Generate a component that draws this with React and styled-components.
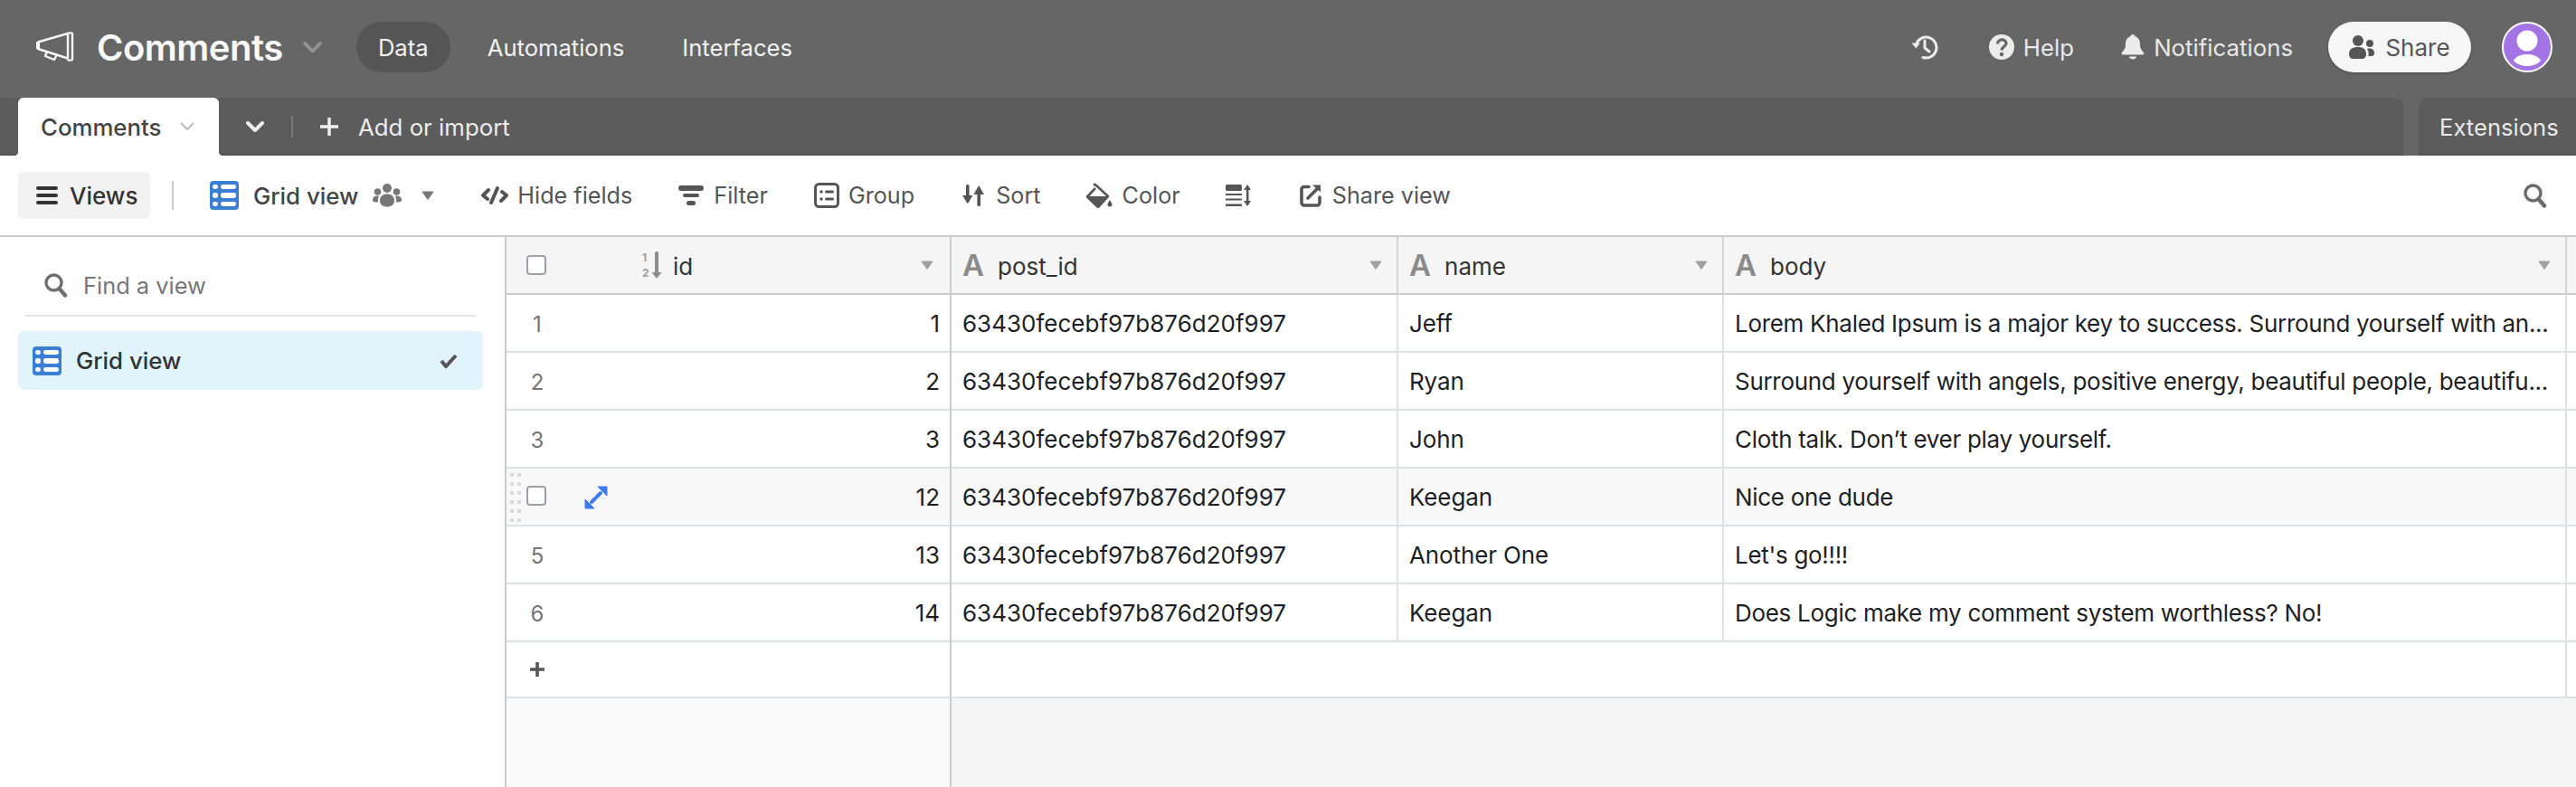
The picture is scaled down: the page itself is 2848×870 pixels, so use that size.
import React from 'react'
import styled, { createGlobalStyle } from 'styled-components'

const GlobalStyle = createGlobalStyle`
  html, body { margin: 0; padding: 0; background: #fff; }
  body { font-family: Inter, "Noto Sans", "Liberation Sans", sans-serif; }
  * { box-sizing: border-box; }
`

const Page = styled.div`
  width: 2848px;
  height: 870px;
  overflow: hidden;
  display: flex;
  flex-direction: column;
  background: #fff;
`
const Slot = styled.span`
  display: flex;
  flex: none;
  margin-left: ${p => p.$ml || 0}px;
  margin-right: ${p => p.$mr || 0}px;
`

// top bar
const TopBar = styled.div`
  height: 108px;
  flex: none;
  background: #666666;
  display: flex;
  align-items: center;
  padding: 0 26px 4px 40px;
  color: #fff;
`
const Title = styled.div`
  font-size: 40px;
  font-weight: 600;
  letter-spacing: -0.5px;
  margin-left: 25px;
  color: #f8f8f8;
`
const NavPill = styled.div`
  height: 56px;
  width: ${p => (p.$w ? `${p.$w}px` : 'auto')};
  margin-left: ${p => p.$ml || 0}px;
  border-radius: 28px;
  display: flex;
  align-items: center;
  justify-content: center;
  font-size: 25.6px;
  color: #f2f2f2;
  background: ${p => (p.$active ? '#555555' : 'transparent')};
`
const Spacer = styled.div`
  flex: 1;
`
const TopAction = styled.div`
  display: flex;
  align-items: center;
  gap: 10px;
  margin-left: ${p => p.$ml || 0}px;
  font-size: 25.8px;
  color: #e8e8e8;
`
const ShareButton = styled.div`
  width: 158px;
  height: 56px;
  margin-left: 39px;
  border-radius: 28px;
  background: #f6f6f6;
  box-shadow: 0 1px 3px rgba(0, 0, 0, 0.3);
  color: #555;
  font-size: 26px;
  display: flex;
  align-items: center;
  justify-content: center;
  gap: 12px;
`
const Avatar = styled.svg`
  width: 56px;
  height: 56px;
  margin-left: 34px;
  flex: none;
`

// tab strip
const TabStrip = styled.div`
  height: 64px;
  flex: none;
  background: #666666;
  display: flex;
  gap: 17px;
`
const TabPanel = styled.div`
  flex: 1;
  background: #5c5c5c;
  border-radius: 0 10px 0 0;
  box-shadow: inset 0 -3px 3px -2px rgba(0, 0, 0, 0.18);
  display: flex;
  align-items: center;
  padding-left: 20px;
`
const ActiveTab = styled.div`
  position: relative;
  width: 222px;
  height: 64px;
  background: #fff;
  border-radius: 6px 6px 0 0;
  display: flex;
  align-items: center;
  padding-left: 25px;
  gap: 21px;
  font-size: 25.8px;
  font-weight: 500;
  color: #444;
  &::before, &::after {
    content: '';
    position: absolute;
    bottom: 0;
    width: 5px;
    height: 5px;
  }
  &::before {
    left: -5px;
    background: radial-gradient(circle at 0 0, transparent 5px, #fff 5.5px);
  }
  &::after {
    right: -5px;
    background: radial-gradient(circle at 100% 0, transparent 5px, #fff 5.5px);
  }
`
const TabDivider = styled.div`
  width: 2px;
  height: 24px;
  margin: 0 30px;
  background: #777;
`
const AddLabel = styled.div`
  font-size: 25.8px;
  color: #ececec;
  margin-left: 22px;
`
const ExtensionsTab = styled.div`
  width: 174px;
  background: #5c5c5c;
  border-radius: 10px 0 0 0;
  box-shadow: inset 0 -3px 3px -2px rgba(0, 0, 0, 0.18);
  display: flex;
  align-items: center;
  padding-left: 23px;
  font-size: 25.6px;
  color: #e8e8e8;
`

// view toolbar
const Toolbar = styled.div`
  height: 90px;
  flex: none;
  border-bottom: 2px solid #cccccc;
  display: flex;
  align-items: center;
  padding: 0 31px 0 20px;
`
const ViewsButton = styled.div`
  width: 146px;
  height: 52px;
  border-radius: 6px;
  background: #f2f2f2;
  display: flex;
  align-items: center;
  gap: 13px;
  padding-left: 20px;
  font-size: 26px;
  font-weight: 500;
  color: #333;
`
const ToolDivider = styled.div`
  width: 2px;
  height: 32px;
  margin: 0 40px 0 24px;
  background: #ccc;
`
const ToolItem = styled.div`
  display: flex;
  align-items: center;
  gap: ${p => p.$gap || 11}px;
  margin-left: ${p => p.$ml || 0}px;
  font-size: ${p => (p.$dark ? 25.8 : 25.2)}px;
  color: ${p => (p.$dark ? '#444' : '#555')};
  font-weight: ${p => (p.$dark ? 500 : 400)};
`

// body
const Main = styled.div`
  flex: 1;
  display: flex;
  min-height: 0;
`
const Sidebar = styled.div`
  width: 560px;
  flex: none;
  border-right: 2px solid #cccccc;
  padding: 20px 24px 0 20px;
`
const FindRow = styled.div`
  height: 68px;
  margin: 0 8px;
  padding-left: 20px;
  border-bottom: 2px solid #e5e5e5;
  display: flex;
  align-items: center;
  gap: 16px;
  font-size: 25.4px;
  color: #777;
`
const ViewItem = styled.div`
  height: 65px;
  margin-top: 16px;
  border-radius: 6px;
  background: #e1f3fb;
  display: flex;
  align-items: center;
  padding: 0 28px 0 16px;
  gap: 16px;
  font-size: 25.8px;
  font-weight: 500;
  color: #333;
`
const GridArea = styled.div`
  flex: 1;
  display: flex;
  min-width: 0;
`
const LeftPane = styled.div`
  width: 492px;
  flex: none;
  border-right: 2px solid #cccccc;
  background: #fafafa;
`
const RightPane = styled.div`
  flex: 1;
  background: #f5f5f5;
`
const HeadRow = styled.div`
  height: 64px;
  display: flex;
  background: #f5f5f5;
  border-bottom: 2px solid #cccccc;
`
const HeadCell = styled.div`
  width: ${p => p.$w}px;
  flex: none;
  display: flex;
  align-items: center;
  padding: 0 16px 0 12px;
  border-right: 2px solid #d4d4d4;
  font-size: 26px;
  color: #333;
`
const HeadLabel = styled.span`
  padding-top: 3px;
`
const FieldGlyph = styled.span`
  font-size: 33px;
  font-weight: 600;
  line-height: 1;
  color: #8a8a8a;
  margin-right: 15px;
`
const Row = styled.div`
  height: ${p => p.$h || 64}px;
  display: flex;
  background: ${p => (p.$hover ? '#f8f8f8' : '#fff')};
  border-bottom: 2px solid #dfe2e4;
`
const IdHead = styled.div`
  width: 100%;
  height: 64px;
  display: flex;
  align-items: center;
  padding: 0 18px 0 22px;
  background: #f5f5f5;
  border-bottom: 2px solid #cccccc;
  font-size: 26px;
  color: #333;
`
const RowNumber = styled.div`
  width: 68px;
  text-align: center;
  font-size: 24px;
  color: #757575;
  line-height: 65px;
`
const IdValue = styled.div`
  flex: 1;
  text-align: right;
  padding-right: 11px;
  font-size: 26px;
  color: #1d1f25;
  line-height: 64px;
`
const Cell = styled.div`
  width: ${p => p.$w}px;
  flex: none;
  padding: 0 0 0 12px;
  border-right: 2px solid #dfe2e4;
  font-size: 26px;
  letter-spacing: ${p => p.$ls || 0}px;
  line-height: 64px;
  color: #1d1f25;
  white-space: nowrap;
  overflow: hidden;
`
const HoverTools = styled.div`
  position: relative;
  width: 110px;
  flex: none;
`
const AddMark = styled.div`
  width: 68px;
  height: 60px;
  display: flex;
  align-items: center;
  justify-content: center;
`
const CheckBox = styled.div`
  width: 22px;
  height: 22px;
  flex: none;
  background: #fff;
  border: 2px solid #9ba1a8;
  border-radius: 4px;
`
const HoverBox = styled(CheckBox)`
  position: absolute;
  left: 22px;
  top: 19px;
`
const Handle = styled.svg`
  position: absolute;
  left: 4px;
  top: 5px;
`
const Expand = styled.svg`
  position: absolute;
  left: 86px;
  top: 19px;
`

const Chevron = ({ size = 20, color = '#fff', sw = 4 }) => (
  <svg width={size} height={size * 0.6} viewBox="0 0 20 12">
    <path d="M2 2l8 8 8-8" fill="none" stroke={color} strokeWidth={sw} strokeLinecap="round" strokeLinejoin="round" />
  </svg>
)
const Caret = ({ color = '#777', w = 14, h = 10 }) => (
  <svg width={w} height={h} viewBox="0 0 14 10">
    <path d="M1 1h12L7 9.5z" fill={color} stroke={color} strokeLinejoin="round" />
  </svg>
)
const Megaphone = () => (
  <svg width="42" height="34" viewBox="0 0 42 34" fill="none" stroke="#f5f5f5" strokeWidth="2.4" strokeLinejoin="round">
    <path d="M2 11.5l33-9.5v27.5L2 19z" />
    <path d="M35 2.5c0-1.4 5-1.4 5 0v28c0 1.4-5 1.4-5 0" />
    <path d="M2 11.5v7.5" strokeWidth="4" />
    <path d="M12 22l-2 5 10 4 3-6" />
  </svg>
)
const GridIcon = () => (
  <svg width="32" height="32" viewBox="0 0 32 32">
    <rect width="32" height="32" rx="4" fill="#3b7fd4" />
    <g fill="#fff">
      <rect x="3" y="4" width="6" height="5" rx="2.4" />
      <rect x="12" y="4" width="17" height="5" rx="2.4" />
      <rect x="3" y="13" width="6" height="6" rx="2.4" />
      <rect x="12" y="13" width="17" height="6" rx="2.4" />
      <rect x="3" y="23" width="6" height="5" rx="2.4" />
      <rect x="12" y="23" width="17" height="5" rx="2.4" />
    </g>
  </svg>
)
const SearchIcon = ({ color = '#6b6b6b' }) => (
  <svg width="28" height="28" viewBox="0 0 28 28" fill="none" stroke={color}>
    <circle cx="11.5" cy="11.5" r="8.5" strokeWidth="3.4" />
    <path d="M17.5 18l6.5 7.5" strokeWidth="4.4" strokeLinecap="round" />
  </svg>
)
const HistoryIcon = () => (
  <svg width="30" height="30" viewBox="0 0 30 30" fill="none" stroke="#ececec">
    <path d="M5.5 12A11.5 11.5 0 1 1 13 26.5" strokeWidth="3" strokeLinecap="round" />
    <path d="M0.5 10.5h9.5l-4.7 6z" fill="#ececec" stroke="none" />
    <path d="M15 8v8l5 4" strokeWidth="3" strokeLinecap="round" strokeLinejoin="round" />
  </svg>
)
const HelpIcon = () => (
  <svg width="28" height="28" viewBox="0 0 28 28">
    <circle cx="14" cy="14" r="14" fill="#ececec" />
    <path d="M9.5 10.5c0-6 9.500-6 9.500-.5 0 3.500-5 3.500-5 7.500" fill="none" stroke="#666" strokeWidth="3.2" />
    <circle cx="14" cy="22" r="2.2" fill="#666" />
  </svg>
)
const BellIcon = () => (
  <svg width="26" height="30" viewBox="0 0 26 30" fill="#ececec">
    <path d="M13 1c1.600 0 2.300 1 2.500 2.200C20 4.500 21 8.500 21 12c0 5 2 6.500 4 9 .8 1 .3 2.500-1.200 2.500H2.200C.7 23.500.2 22 1 21c2-2.500 4-4 4-9 0-3.500 1-7.500 5.500-8.800C10.700 2 11.400 1 13 1z" />
    <path d="M9 25.500h8c0 4-8 4-8 0z" />
  </svg>
)
const PeopleIcon = () => (
  <svg width="28" height="28" viewBox="0 0 28 28" fill="#555">
    <circle cx="10" cy="7" r="6" />
    <path d="M0 22c0-6 4-8 10-8s9 2.500 9 8c0 3-2 5-4 5H4c-2 0-4-2-4-5z" />
    <circle cx="23" cy="10" r="4" />
    <path d="M21 15.500c4-.5 7 1 7 5 0 2-1 3.500-3 3.500h-3.500c.5-3.500 0-6-1.500-8z" />
  </svg>
)
const TeamIcon = () => (
  <svg width="32" height="26" viewBox="0 0 32 26" fill="#777">
    <circle cx="16" cy="5" r="5" />
    <circle cx="5.5" cy="9" r="3.8" />
    <circle cx="26.5" cy="9" r="3.8" />
    <path d="M8 19c0-5 3-7.500 8-7.500s8 2.500 8 7.500c0 4-3 6.500-8 6.500S8 23 8 19z" />
    <path d="M0 18c0-3 2-4.500 5-4.500.8 0 1.500.1 2 .3-.8 1.500-1 3.200-1 5.200 0 .5 0 1 .1 1.500C2.500 20.500 0 20.500 0 18z" />
    <path d="M32 18c0-3-2-4.500-5-4.500-.8 0-1.500.1-2 .3.800 1.500 1 3.200 1 5.200 0 .5 0 1-.1 1.500 3.600 0 6.100 0 6.100-2.500z" />
  </svg>
)
const HideIcon = () => (
  <svg width="30" height="22" viewBox="0 0 30 22" fill="none" stroke="#555" strokeWidth="4" strokeLinecap="round" strokeLinejoin="round">
    <path d="M8 5l-6 6 5 4" />
    <path d="M23 7l5 4-6 6" />
    <path d="M18 3l-7 16" />
  </svg>
)
const FilterIcon = () => (
  <svg width="28" height="22" viewBox="0 0 28 22" fill="#555">
    <rect width="28" height="6" rx="3" />
    <rect x="5" y="9" width="18" height="4" rx="2" />
    <rect x="9" y="17" width="10" height="5" rx="2.5" />
  </svg>
)
const GroupIcon = () => (
  <svg width="28" height="28" viewBox="0 0 28 28">
    <rect x="1.5" y="1.5" width="25" height="25" rx="4" fill="none" stroke="#555" strokeWidth="3" />
    <g fill="#555">
      <circle cx="8" cy="10" r="1.8" />
      <circle cx="8" cy="18" r="1.8" />
      <rect x="12" y="8.5" width="10" height="3" rx="1.5" />
      <rect x="12" y="16.5" width="10" height="3" rx="1.5" />
    </g>
  </svg>
)
const SortIcon = () => (
  <svg width="24" height="26" viewBox="0 0 24 26" fill="#555">
    <rect x="4" y="1" width="3.6" height="20" rx="1.5" />
    <path d="M0 13h11.500l-5.700 9z" />
    <rect x="16.4" y="4" width="3.6" height="21" rx="1.5" />
    <path d="M12.400 12h11.600l-5.800-10z" />
  </svg>
)
const ColorIcon = () => (
  <svg width="30" height="28" viewBox="0 0 30 28" fill="#555">
    <path d="M8 1.500l3 1.500L24 15 13 27 1 15.500 10 6" fill="none" stroke="#555" strokeWidth="2.6" strokeLinejoin="round" />
    <path d="M1.500 15h22L13 27z" />
    <path d="M26 19c1.500 2.500 2.500 3.500 2.500 5a2.500 2.500 0 0 1-5 0c0-1.500 1-2.500 2.500-5z" />
  </svg>
)
const RowHeightIcon = () => (
  <svg width="28" height="24" viewBox="0 0 28 24" fill="#555">
    <rect width="18" height="7" rx="1.5" />
    <rect y="10" width="18" height="2" />
    <rect y="15.5" width="18" height="2" />
    <rect y="21.5" width="18" height="2.5" />
    <rect x="23" y="2" width="2.5" height="20" />
    <path d="M20 6l4.200-6L28 6zM20 18h8l-3.800 6z" />
  </svg>
)
const ShareViewIcon = () => (
  <svg width="24" height="26" viewBox="0 0 24 26" fill="none" stroke="#555" strokeLinecap="round" strokeLinejoin="round">
    <path d="M10 3.500H5a3 3 0 0 0-3 3V21a3 3 0 0 0 3 3h14a3 3 0 0 0 3-3v-6" strokeWidth="3.6" />
    <path d="M9 16l10-10" strokeWidth="3.6" />
    <path d="M14 1.500h9v8z" fill="#555" stroke="none" />
  </svg>
)
const SortFieldIcon = () => (
  <svg width="22" height="30" viewBox="0 0 22 30">
    <rect x="14" y="0" width="4" height="26" rx="1.5" fill="#8d8d8d" />
    <path d="M10.500 23h11l-5.500 7z" fill="#8d8d8d" />
    <text x="0" y="11" fontSize="12" fontWeight="700" fontFamily="Inter, sans-serif" fill="#9a9a9a">1</text>
    <text x="0" y="28" fontSize="12" fontWeight="700" fontFamily="Inter, sans-serif" fill="#9a9a9a">2</text>
  </svg>
)

const COLS = [494, 360, 932]

const rows = [
  { n: '1', id: 1, name: 'Jeff', body: 'Lorem Khaled Ipsum is a major key to success. Surround yourself with an...' },
  { n: '2', id: 2, name: 'Ryan', body: 'Surround yourself with angels, positive energy, beautiful people, beautifu...' },
  { n: '3', id: 3, name: 'John', body: 'Cloth talk. Don\u2019t ever play yourself.' },
  { n: '4', id: 12, name: 'Keegan', body: 'Nice one dude', hover: true },
  { n: '5', id: 13, name: 'Another One', body: "Let's go!!!!" },
  { n: '6', id: 14, name: 'Keegan', body: 'Does Logic make my comment system worthless? No!' },
]

const fields = [
  { label: 'post_id', w: COLS[0] },
  { label: 'name', w: COLS[1] },
  { label: 'body', w: COLS[2] },
]

export default function App() {
  return (
    <Page>
      <GlobalStyle />
      <TopBar>
        <Megaphone />
        <Title>Comments</Title>
        <Slot $ml={22} $mr={38}>
          <Chevron size={21} color="#939393" sw={3.6} />
        </Slot>
        <NavPill $active $w={104}>Data</NavPill>
        <NavPill $ml={41}>Automations</NavPill>
        <NavPill $ml={64}>Interfaces</NavPill>
        <Spacer />
        <HistoryIcon />
        <TopAction $ml={56}><HelpIcon />Help</TopAction>
        <TopAction $ml={52}><BellIcon />Notifications</TopAction>
        <ShareButton><PeopleIcon />Share</ShareButton>
        <Avatar viewBox="0 0 56 56">
          <circle cx="28" cy="28" r="27" fill="#a473e6" stroke="#fff" strokeWidth="2" />
          <circle cx="28" cy="21" r="11.5" fill="#fff" />
          <path d="M13 43c3-5 8-7 15-7s12 2 15 7c-3 3.500-8 6-15 6s-12-2.500-15-6z" fill="#fff" />
        </Avatar>
      </TopBar>

      <TabStrip>
        <TabPanel>
          <ActiveTab>
            Comments
            <Chevron size={16} color="#c0c0c0" sw={3} />
          </ActiveTab>
          <Slot $ml={30}>
            <Chevron size={20} color="#f0f0f0" sw={4} />
          </Slot>
          <TabDivider />
          <svg width="20" height="20" viewBox="0 0 20 20">
            <path d="M10 0v20M0 10h20" stroke="#f0f0f0" strokeWidth="3.4" />
          </svg>
          <AddLabel>Add or import</AddLabel>
        </TabPanel>
        <ExtensionsTab>Extensions</ExtensionsTab>
      </TabStrip>

      <Toolbar>
        <ViewsButton>
          <svg width="24" height="20" viewBox="0 0 24 20" fill="#333">
            <rect width="24" height="4" rx="2" />
            <rect y="8" width="24" height="4" rx="2" />
            <rect y="16" width="24" height="4" rx="2" />
          </svg>
          Views
        </ViewsButton>
        <ToolDivider />
        <ToolItem $gap={16} $dark>
          <GridIcon />
          Grid view
          <TeamIcon />
        </ToolItem>
        <Slot $ml={22}><Caret /></Slot>
        <ToolItem $ml={52} $gap={10}><HideIcon />Hide fields</ToolItem>
        <ToolItem $ml={51}><FilterIcon />Filter</ToolItem>
        <ToolItem $ml={51} $gap={10}><GroupIcon />Group</ToolItem>
        <ToolItem $ml={53} $gap={13}><SortIcon />Sort</ToolItem>
        <ToolItem $ml={50} $gap={10}><ColorIcon />Color</ToolItem>
        <ToolItem $ml={50}><RowHeightIcon /></ToolItem>
        <ToolItem $ml={54} $gap={12}><ShareViewIcon />Share view</ToolItem>
        <Spacer />
        <SearchIcon />
      </Toolbar>

      <Main>
        <Sidebar>
          <FindRow>
            <SearchIcon color="#707070" />
            Find a view
          </FindRow>
          <ViewItem>
            <GridIcon />
            Grid view
            <Spacer />
            <svg width="20" height="16" viewBox="0 0 20 16">
              <path d="M2 8l5 6L18 2" fill="none" stroke="#555" strokeWidth="4" />
            </svg>
          </ViewItem>
        </Sidebar>

        <GridArea>
          <LeftPane>
            <IdHead>
              <CheckBox />
              <Slot $ml={106} $mr={12}><SortFieldIcon /></Slot>
              <HeadLabel>id</HeadLabel>
              <Spacer />
              <Caret color="#a0a0a0" />
            </IdHead>
            {rows.map(r => (
              <Row key={r.n} $hover={r.hover}>
                {r.hover ? (
                  <HoverTools>
                    <Handle width="12" height="54" viewBox="0 0 12 54" fill="#d8dadc">
                      {[0, 10, 20, 30, 40, 50].map(y => (
                        <g key={y}>
                          <rect y={y} width="4" height="4" />
                          <rect x="8" y={y} width="4" height="4" />
                        </g>
                      ))}
                    </Handle>
                    <HoverBox />
                    <Expand width="26" height="26" viewBox="0 0 26 26" fill="#3d7bf2" stroke="#3d7bf2">
                      <path d="M25 1h-10l10 10z" />
                      <path d="M1 25h10l-10-10z" />
                      <path d="M18 8l-4 4M8 18l4-4" strokeWidth="4" strokeLinecap="round" />
                    </Expand>
                  </HoverTools>
                ) : (
                  <RowNumber>{r.n}</RowNumber>
                )}
                <IdValue>{r.id}</IdValue>
              </Row>
            ))}
            <Row $h={62}>
              <AddMark>
                <svg width="16" height="16" viewBox="0 0 16 16">
                  <path d="M8 0v16M0 8h16" stroke="#555" strokeWidth="3.6" />
                </svg>
              </AddMark>
            </Row>
          </LeftPane>

          <RightPane>
            <HeadRow>
              {fields.map(f => (
                <HeadCell key={f.label} $w={f.w}>
                  <FieldGlyph>A</FieldGlyph>
                  <HeadLabel>{f.label}</HeadLabel>
                  <Spacer />
                  <Caret color="#a0a0a0" />
                </HeadCell>
              ))}
            </HeadRow>
            {rows.map(r => (
              <Row key={r.n} $hover={r.hover}>
                <Cell $w={COLS[0]}>63430fecebf97b876d20f997</Cell>
                <Cell $w={COLS[1]} $ls={-0.12}>{r.name}</Cell>
                <Cell $w={COLS[2]} $ls={-0.3}>{r.body}</Cell>
              </Row>
            ))}
            <Row $h={62}>
              <Cell $w={COLS[0] + COLS[1] + COLS[2]} />
            </Row>
          </RightPane>
        </GridArea>
      </Main>
    </Page>
  )
}
